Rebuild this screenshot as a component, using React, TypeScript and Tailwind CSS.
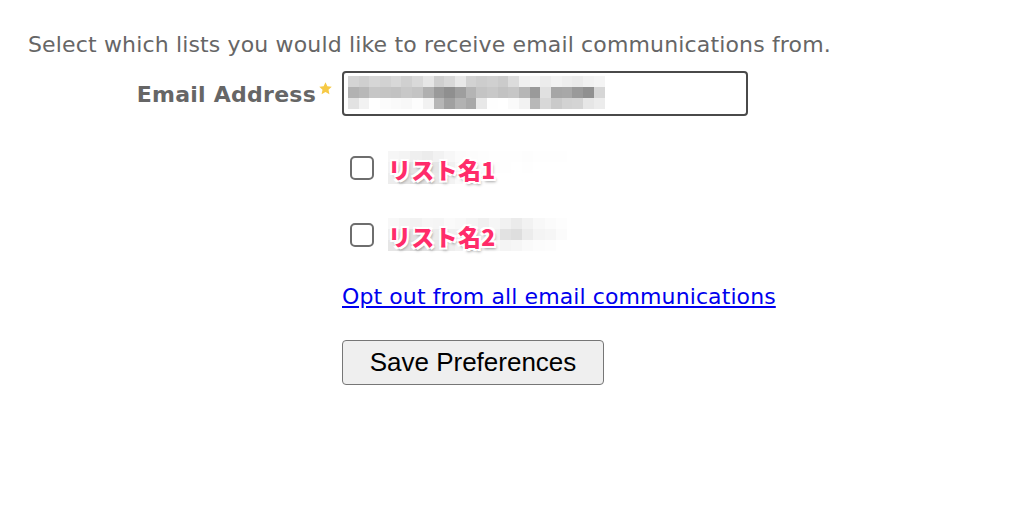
import React from 'react'

const inputRows = [
	['#d4d4d4', '#cfcfcf', '#d6d6d6', '#d2d2d2', '#d8d8d8', '#d0d0d0', '#d9d9d9', '#e6e6e6', '#cfcfcf', '#d8d8d8', '#e8e8e8', '#d2d2d2', '#cdcdcd', '#d0d0d0', '#cbcbcb', '#dcdcdc', '#f0f0f0', '#f4f4f4', '#ececec', '#f2f2f2', '#eeeeee', '#ebebeb', '#f1f1f1', '#f4f4f4'],
	['#b2b2b2', '#b8b8b8', '#c6c6c6', '#c4c4c4', '#c2c2c2', '#c8c8c8', '#c4c4c4', '#b0b0b0', '#9a9a9a', '#8f8f8f', '#9e9e9e', '#b4b4b4', '#c4c4c4', '#c8c8c8', '#c2c2c2', '#c6c6c6', '#b6b6b6', '#9a9a9a', '#e0e0e0', '#a6a6a6', '#a8a8a8', '#9a9a9a', '#909090', '#d6d6d6'],
	['#e2e2e2', '#f2f2f2', '#ffffff', '#fcfcfc', '#fafafa', '#f8f8f8', '#fdfdfd', '#f2f2f2', '#b6b6b6', '#a0a0a0', '#b2b2b2', '#a8a8a8', '#e8e8e8', '#fefefe', '#ffffff', '#fafafa', '#f2f2f2', '#b8b8b8', '#d8d8d8', '#cacaca', '#d2d2d2', '#d4d4d4', '#e6e6e6', '#ececec'],
]

const Blur = ({ rows, w }: { rows: string[][]; w: number }) => (
	<div className="flex flex-col">
		{rows.map((r, i) => (
			<div key={i} className="flex">
				{r.map((c, j) => (
					<span key={j} className="block h-[11px]" style={{ width: w, background: c }} />
				))}
			</div>
		))}
	</div>
)

const label1Rows = [
	['#f6f6f6', '#f4f4f4', '#efefef', '#ececec', '#f2f2f2', '#f7f7f7', '#fbfbfb', '#fcfcfc', '#fdfdfd', '#fefefe', '#fefefe', '#fefefe', '#fdfdfd', '#fefefe', '#fefefe', '#fefefe', '#ffffff', '#ffffff'],
	['#f2f2f2', '#eaeaea', '#e3e3e3', '#e0e0e0', '#e6e6e6', '#f1f1f1', '#f8f8f8', '#fafafa', '#fcfcfc', '#fdfdfd', '#fefefe', '#ffffff', '#fefefe', '#ffffff', '#ffffff', '#ffffff', '#ffffff', '#ffffff'],
	['#ededed', '#e4e4e4', '#dedede', '#e1e1e1', '#e8e8e8', '#f3f3f3', '#fafafa', '#fefefe', '#ffffff', '#ffffff', '#ffffff', '#ffffff', '#ffffff', '#ffffff', '#ffffff', '#ffffff', '#ffffff', '#ffffff'],
]

const label2Rows = [
	['#f8f8f8', '#f4f4f4', '#f2f2f2', '#f6f6f6', '#f5f5f5', '#fafafa', '#f8f8f8', '#f4f4f4', '#f0f0f0', '#f6f6f6', '#f1f1f1', '#ebebeb', '#f2f2f2', '#f8f8f8', '#fbfbfb', '#fdfdfd'],
	['#eeeeee', '#e6e6e6', '#e0e0e0', '#e6e6e6', '#ececec', '#efefef', '#f0f0f0', '#eeeeee', '#e8e8e8', '#f0f0f0', '#e2e2e2', '#dedede', '#ececec', '#f4f4f4', '#f6f6f6', '#fbfbfb'],
	['#e6e6e6', '#e2e2e2', '#dcdcdc', '#e2e2e2', '#e8e8e8', '#eeeeee', '#f2f2f2', '#f4f4f4', '#f6f6f6', '#f8f8f8', '#f4f4f4', '#f6f6f6', '#fafafa', '#fcfcfc', '#fdfdfd', '#ffffff'],
]

const ListRow = ({ name, rows, w }: { name: string; rows: string[][]; w: number }) => (
	<div className="flex items-center h-[35px]">
		<span className="block w-[24px] h-[24px] ml-[8px] border-2 border-[#6e6e6e] rounded-[5px] bg-white" />
		<div className="relative ml-[14px]">
			<Blur rows={rows} w={w} />
			<span
				className="absolute left-0 top-[2px] text-[23px] leading-[33px] font-black text-[#ff2c6a] tracking-[0.3px]"
				style={{
					fontFamily: '"Noto Sans CJK JP", sans-serif',
					textShadow:
						'1px 0 0 #fff, -1px 0 0 #fff, 0 1px 0 #fff, 0 -1px 0 #fff, 2px 2px 0 #fff, -2px -2px 0 #fff, 2px -2px 0 #fff, -2px 2px 0 #fff, 2px 3px 3px rgba(0,0,0,0.35)',
				}}
			>
				{name}
			</span>
		</div>
	</div>
)

export default function App() {
	return (
		<div className="w-[1024px] h-[529px] bg-white pt-[30px]">
			<p className="pl-[28px] text-[22px] leading-[30px] text-[#666666] font-['DejaVu_Sans',sans-serif] tracking-[0.15px]">
				Select which lists you would like to receive email communications from.
			</p>
			<div className="flex mt-[11px]">
				<div className="w-[342px] flex justify-end items-start pr-[9px] pt-[9px]">
					<span className="text-[22px] leading-[30px] font-bold text-[#666666] font-['DejaVu_Sans',sans-serif] tracking-[0.25px]">
						Email Address
					</span>
					<svg width="15" height="15" viewBox="0 0 24 24" className="mt-[1px] ml-[2px]">
						<path d="M12 2l3 6.5 7 .8-5.2 4.8 1.5 7L12 17.5 5.7 21.1l1.5-7L2 9.3l7-.8z" fill="#f6c945" />
					</svg>
				</div>
				<div className="w-[406px] h-[45px] border-2 border-[#4a4a4a] rounded-[4px] pl-[4px] pt-[3px] overflow-hidden">
					<Blur rows={inputRows} w={10.7} />
				</div>
			</div>
			<div className="pl-[342px] pt-[34px] flex flex-col">
				<ListRow name="リスト名1" rows={label1Rows} w={11.2} />
				<div className="h-[32px]" />
				<ListRow name="リスト名2" rows={label2Rows} w={11.2} />
				<a href="#" className="mt-[30px] text-[22px] leading-[30px] text-[#0000ee] underline font-['DejaVu_Sans',sans-serif] tracking-[0.1px] w-fit">
					Opt out from all email communications
				</a>
				<button className="mt-[28px] w-[262px] h-[45px] bg-[#efefef] border border-[#767676] rounded-[4px] text-[26px] text-black font-['Liberation_Sans',sans-serif]">
					Save Preferences
				</button>
			</div>
		</div>
	)
}
